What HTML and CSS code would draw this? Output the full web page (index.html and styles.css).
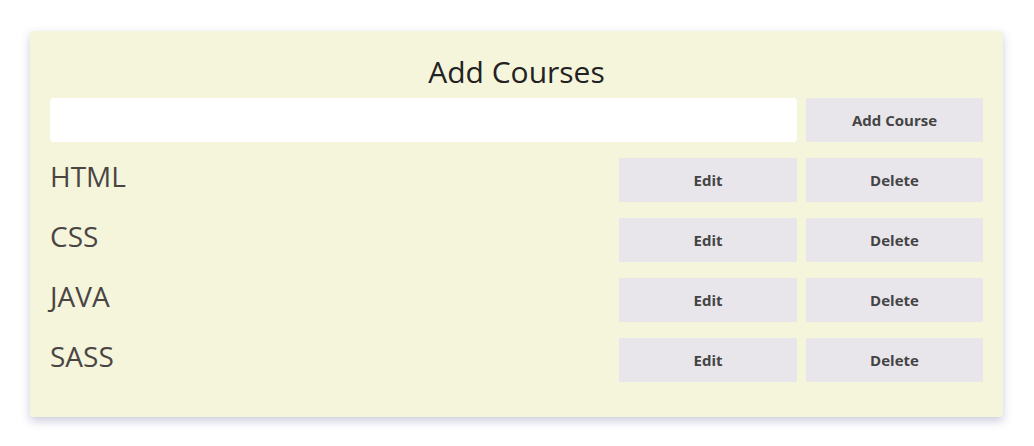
FILE: index.html
```html
<!DOCTYPE html>
<html>
<head>
<meta charset="utf-8">
<link rel="stylesheet" href="styles.css">
</head>
<body>
<div class="card">
  <h1 class="title">Add Courses</h1>
  <div class="row add-row">
    <input class="course-input" type="text">
    <button class="btn">Add Course</button>
  </div>
  <div class="row">
    <span class="course">HTML</span>
    <button class="btn">Edit</button>
    <button class="btn">Delete</button>
  </div>
  <div class="row">
    <span class="course">CSS</span>
    <button class="btn">Edit</button>
    <button class="btn">Delete</button>
  </div>
  <div class="row">
    <span class="course">JAVA</span>
    <button class="btn">Edit</button>
    <button class="btn">Delete</button>
  </div>
  <div class="row">
    <span class="course">SASS</span>
    <button class="btn">Edit</button>
    <button class="btn">Delete</button>
  </div>
</div>
</body>
</html>
```
FILE: styles.css
```css
html, body {
  margin: 0;
  padding: 0;
  background: #ffffff;
}
body {
  font-family: "Open Sans", "Noto Sans", sans-serif;
  padding: 31px 31px 29px 30px;
}
.card {
  width: 933px;
  background: #f5f5dc;
  border-radius: 3px;
  box-shadow: 0 4px 10px rgba(50, 50, 120, 0.25);
  padding: 0 20px 35px 20px;
  display: flex;
  flex-direction: column;
  gap: 16px;
}
.title {
  margin: 0 0 -10px 0;
  padding-top: 21px;
  text-align: center;
  font-weight: 400;
  font-size: 30px;
  line-height: 40px;
  color: #222222;
}
.row {
  display: flex;
  align-items: center;
  gap: 9px;
  height: 44px;
}
.course-input {
  flex: 1;
  height: 44px;
  box-sizing: border-box;
  border: none;
  border-radius: 4px;
  background: #ffffff;
  margin: 0;
  padding: 0 10px;
}
.course {
  flex: 1;
  font-size: 28px;
  color: #4a4543;
  line-height: 36px;
  margin-top: -8px;
}
.btn {
  width: 178px;
  height: 44px;
  border: none;
  margin: 0;
  background: #e8e6eb;
  color: #444444;
  font-family: "Open Sans", "Noto Sans", sans-serif;
  font-weight: 700;
  font-size: 15px;
}
.row .btn:last-child {
  width: 177px;
}
```
